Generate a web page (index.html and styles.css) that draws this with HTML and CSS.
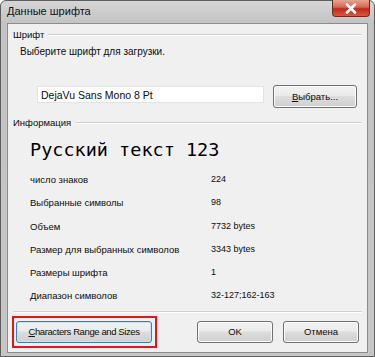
FILE: index.html
```html
<!DOCTYPE html>
<html lang="ru">

<head>
    <meta charset="UTF-8">
    <meta name="viewport" content="width=device-width, initial-scale=1.0">
    <title>Данные шрифта</title>
    <link rel="stylesheet" href="styles.css">
</head>

<body>

    <div class="window">
        <div class="title-bar">
            <span class="title-text">Данные шрифта</span>
            <div class="close-btn">
                <svg width="14" height="11" viewBox="0 0 14 11">
                    <path d="M3 1.5 L11 9.5 M11 1.5 L3 9.5" stroke="#fff" stroke-width="2.6" stroke-linecap="round" />
                </svg>
            </div>
        </div>

        <div class="client">
            <div class="group-header">
                <span>Шрифт</span>
                <div class="group-line"></div>
            </div>
            <p class="hint">Выберите шрифт для загрузки.</p>

            <div class="font-row">
                <div class="font-input">DejaVu Sans Mono 8 Pt</div>
                <button class="btn btn-choose"><u>В</u>ыбрать...</button>
            </div>

            <div class="group-header">
                <span>Информация</span>
                <div class="group-line"></div>
            </div>

            <div class="preview">Русский текст 123</div>

            <div class="info-list">
                <div class="info-row"><span class="info-label">число знаков</span><span class="info-value">224</span></div>
                <div class="info-row"><span class="info-label">Выбранные символы</span><span class="info-value">98</span></div>
                <div class="info-row"><span class="info-label">Объем</span><span class="info-value">7732 bytes</span></div>
                <div class="info-row"><span class="info-label">Размер для выбранных символов</span><span class="info-value">3343 bytes</span></div>
                <div class="info-row"><span class="info-label">Размеры шрифта</span><span class="info-value">1</span></div>
                <div class="info-row"><span class="info-label">Диапазон символов</span><span class="info-value">32-127;162-163</span></div>
            </div>

            <div class="separator"></div>

            <div class="button-row">
                <div class="highlight">
                    <button class="btn btn-default"><u>C</u>haracters Range and Sizes</button>
                </div>
                <div class="right-buttons">
                    <button class="btn btn-small">OK</button>
                    <button class="btn btn-small">Отмена</button>
                </div>
            </div>
        </div>
    </div>

</body>

</html>
```

FILE: styles.css
```css
body {
    margin: 0;
    padding: 0;
    background-color: #ffffff;
    font-family: 'Liberation Sans', Arial, sans-serif;
    font-size: 9.5px;
    color: #0c0c0c;
}

.window {
    width: 375px;
    height: 357px;
    box-sizing: border-box;
    padding: 0 6px 3px 6px;
    border: 1px solid #5e5e5e;
    border-radius: 6px 6px 0 0;
    background: linear-gradient(to bottom, #d6d6d6 0px, #c3c3c3 22px, #c6c6c6 100%);
    display: flex;
    flex-direction: column;
}

.title-bar {
    height: 22px;
    display: flex;
    justify-content: space-between;
    align-items: flex-start;
}

.title-text {
    padding-top: 4px;
    font-size: 11px;
    color: #111;
}

.close-btn {
    width: 38px;
    height: 17px;
    margin-top: -1px;
    margin-right: -2px;
    box-sizing: border-box;
    border: 1px solid #6b2a20;
    border-top: none;
    border-radius: 0 0 4px 4px;
    background: linear-gradient(to bottom, #e7a493 0%, #d8664e 45%, #c3271a 55%, #d95a3c 100%);
    display: flex;
    align-items: center;
    justify-content: center;
}

.client {
    flex: 1;
    background-color: #f0f0f0;
    border: 1px solid #8c8c8c;
    padding: 3px 5px 2px 5px;
    display: flex;
    flex-direction: column;
}

.group-header {
    display: flex;
    align-items: center;
    gap: 4px;
    height: 15px;
}

.group-line {
    flex: 1;
    height: 1px;
    background-color: #d0d0d0;
    border-bottom: 1px solid #ffffff;
}

.hint {
    margin: 2px 0 0 7px;
    font-size: 10px;
    line-height: 15px;
}

.font-row {
    display: flex;
    align-items: flex-start;
    margin: 26px 0 7px 24px;
}

.font-input {
    width: 227px;
    height: 17px;
    margin-top: 1px;
    line-height: 17px;
    padding-left: 3px;
    box-sizing: border-box;
    font-size: 10.5px;
    background-color: #ffffff;
    border: 1px solid #e4e4e4;
}

.btn {
    font-family: inherit;
    font-size: 9.5px;
    color: #0c0c0c;
    height: 23px;
    padding: 0;
    white-space: nowrap;
    border: 1px solid #707070;
    border-radius: 3px;
    background: linear-gradient(to bottom, #f2f2f2 0%, #ebebeb 45%, #dddddd 50%, #cfcfcf 100%);
    box-shadow: inset 0 0 0 1px #fbfbfb;
}

.btn-choose {
    width: 84px;
    margin-left: 9px;
}

.preview {
    margin: 7px 0 0 17px;
    font-family: 'DejaVu Sans Mono', monospace;
    font-size: 18.5px;
    line-height: 26px;
    color: #000;
}

.info-list {
    margin: 5px 0 0 17px;
    display: flex;
    flex-direction: column;
}

.info-row {
    display: flex;
    height: 23.3px;
    line-height: 23px;
}

.info-label {
    width: 181px;
}

.info-value {
    font-size: 9px;
}

.separator {
    margin-top: 3px;
    height: 1px;
    background-color: #d0d0d0;
    border-bottom: 1px solid #ffffff;
}

.button-row {
    margin-top: 3px;
    display: flex;
    justify-content: space-between;
    align-items: center;
}

.highlight {
    margin-left: -1px;
    border: 2px solid #e8141c;
    padding: 3px 3px 3px 2px;
}

.btn-default {
    width: 136px;
    height: 22px;
    letter-spacing: -0.4px;
    border-color: #3c7fb1;
    box-shadow: inset 0 0 0 1px #bfe6f7;
}

.right-buttons {
    display: flex;
    gap: 10px;
    margin-right: 3px;
}

.btn-small {
    width: 76px;
    height: 22px;
}
```
